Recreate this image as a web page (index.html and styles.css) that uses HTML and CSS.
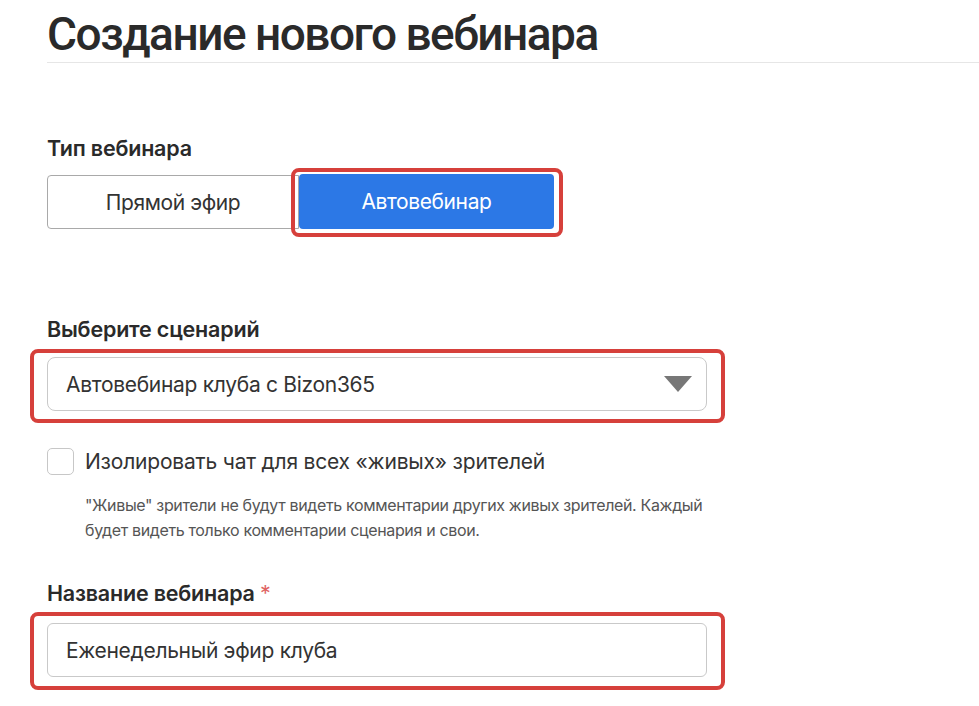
FILE: index.html
```html
<!DOCTYPE html>
<html lang="ru">
  <head>
    <meta charset="UTF-8" />
    <meta name="viewport" content="width=device-width, initial-scale=1.0" />
    <title>Создание нового вебинара</title>
    <link rel="stylesheet" href="styles.css">
  </head>
  <body>
    <main>
      <h1>Создание нового вебинара</h1>

      <section class="field typeField">
        <span class="label">Тип вебинара</span>
        <div class="switch">
          <button class="option">Прямой эфир</button>
          <div class="marked markedSwitch">
            <button class="option active">Автовебинар</button>
          </div>
        </div>
      </section>

      <section class="field scenarioField">
        <span class="label">Выберите сценарий</span>
        <div class="marked markedSelect">
          <div class="select">
            <span>Автовебинар клуба с Bizon365</span>
            <svg class="arrow" width="28" height="16" viewBox="0 0 28 16">
              <path d="M0 0 H28 L14 16 Z" fill="#777" />
            </svg>
          </div>
        </div>
      </section>

      <section class="check">
        <label class="checkRow">
          <span class="box"></span>
          <span class="checkText">Изолировать чат для всех «живых» зрителей</span>
        </label>
        <p class="hint">
          "Живые" зрители не будут видеть комментарии других живых зрителей. Каждый
          будет видеть только комментарии сценария и свои.
        </p>
      </section>

      <section class="field nameField">
        <span class="label">Название вебинара <b>*</b></span>
        <div class="marked markedInput">
          <input type="text" value="Еженедельный эфир клуба" />
        </div>
      </section>
    </main>
  </body>
</html>
```

FILE: styles.css
```css
:root {
  --text: #2b2b2b;
  --muted: #555555;
  --line: #c9c9c9;
  --blue: #2c78e6;
  --red: #d6403b;
}
* {
  margin: 0;
  padding: 0;
  box-sizing: border-box;
  font-family: Inter, "Noto Sans", sans-serif;
}
body {
  background-color: #ffffff;
  color: var(--text);
}
main {
  padding: 0 0 30px 47px;
}

h1 {
  font-family: Roboto, Inter, sans-serif;
  font-size: 46px;
  font-weight: 500;
  letter-spacing: -1.5px;
  line-height: 56px;
  margin-top: 6px;
  border-bottom: 1px solid #e6e6e6;
  color: #2a2a2a;
}

.field {
  display: flex;
  flex-direction: column;
}

.label {
  font-size: 21.5px;
  font-weight: 600;
  letter-spacing: -0.2px;
  line-height: 28px;
  color: #2a2a2a;
}
.label b {
  color: #e06464;
  font-weight: 400;
}

.typeField {
  margin-top: 71px;
}
.typeField .label {
  margin-bottom: 13px;
}

.switch {
  display: flex;
  align-items: center;
}
.option {
  width: 252px;
  height: 54px;
  border: 1px solid #a9a9a9;
  border-radius: 4px 0 0 4px;
  background-color: #ffffff;
  font-size: 21px;
  letter-spacing: -0.4px;
  color: #333333;
  cursor: pointer;
}
.option.active {
  width: 255px;
  height: 55px;
  border: none;
  border-radius: 4px;
  background-color: var(--blue);
  color: #ffffff;
  margin-top: -2px;
}

.marked {
  position: relative;
}
.marked::after {
  content: "";
  position: absolute;
  border: 4px solid var(--red);
  border-radius: 8px;
  pointer-events: none;
}
.markedSwitch::after {
  inset: -8px -9px -8px -8px;
}
.markedSelect,
.markedInput {
  width: 660px;
}
.markedSelect::after {
  inset: -8px -18px -12px -17px;
}
.markedInput::after {
  inset: -11px -18px -13px -17px;
}

.scenarioField {
  margin-top: 86px;
}
.scenarioField .label {
  margin-bottom: 14px;
}

.select {
  height: 54px;
  border: 1px solid var(--line);
  border-radius: 8px;
  display: flex;
  align-items: center;
  justify-content: space-between;
  padding: 0 14px 0 18px;
  font-size: 21px;
  letter-spacing: -0.3px;
  color: #333333;
}

.check {
  margin-top: 37px;
}
.checkRow {
  display: flex;
  align-items: center;
  gap: 11px;
}
.box {
  width: 27px;
  height: 27px;
  border: 1px solid #c7c7c7;
  border-radius: 5px;
}
.checkText {
  font-size: 21px;
  letter-spacing: -0.2px;
  color: #333333;
}
.hint {
  margin-top: 18px;
  padding-left: 38px;
  width: 670px;
  font-size: 16px;
  line-height: 25px;
  letter-spacing: -0.35px;
  color: var(--muted);
}

.nameField {
  margin-top: 36px;
}
.nameField .label {
  margin-bottom: 16px;
}
.nameField input {
  width: 660px;
  height: 54px;
  border: 1px solid var(--line);
  border-radius: 6px;
  padding: 0 18px;
  font-size: 21px;
  letter-spacing: -0.3px;
  color: #333333;
  outline: none;
}
```
